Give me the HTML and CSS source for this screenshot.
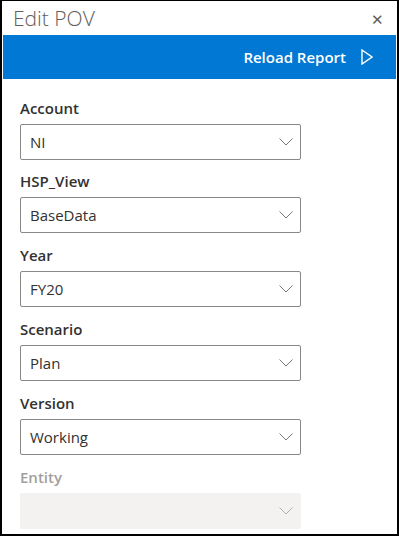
FILE: index.html
```html
<!DOCTYPE html>
<html lang="en">
  <head>
    <meta charset="UTF-8" />
    <title>Edit POV</title>
    <link rel="stylesheet" href="styles.css">
  </head>
  <body>
    <div class="panel">
      <div class="panel-header">
        <div class="panel-title">Edit POV</div>
        <div class="panel-close">&#x2715;</div>
      </div>

      <div class="command-bar">
        <span class="reload">Reload Report</span>
        <svg class="play" width="12" height="16" viewBox="0 0 12 16">
          <path d="M1 1 L11 8 L1 15 Z" fill="none" stroke="#fff" stroke-width="1.4" stroke-linejoin="miter" />
        </svg>
      </div>

      <div class="fields">
        <div class="field">
          <div class="field-label">Account</div>
          <div class="dropdown">
            <span class="dropdown-text">NI</span>
            <svg class="chevron" width="14" height="8" viewBox="0 0 14 8"><path d="M0.5 0.5 L7 7 L13.5 0.5" fill="none" stroke="#7a7876" stroke-width="1" /></svg>
          </div>
        </div>

        <div class="field">
          <div class="field-label">HSP_View</div>
          <div class="dropdown">
            <span class="dropdown-text">BaseData</span>
            <svg class="chevron" width="14" height="8" viewBox="0 0 14 8"><path d="M0.5 0.5 L7 7 L13.5 0.5" fill="none" stroke="#7a7876" stroke-width="1" /></svg>
          </div>
        </div>

        <div class="field">
          <div class="field-label">Year</div>
          <div class="dropdown">
            <span class="dropdown-text">FY20</span>
            <svg class="chevron" width="14" height="8" viewBox="0 0 14 8"><path d="M0.5 0.5 L7 7 L13.5 0.5" fill="none" stroke="#7a7876" stroke-width="1" /></svg>
          </div>
        </div>

        <div class="field">
          <div class="field-label">Scenario</div>
          <div class="dropdown">
            <span class="dropdown-text">Plan</span>
            <svg class="chevron" width="14" height="8" viewBox="0 0 14 8"><path d="M0.5 0.5 L7 7 L13.5 0.5" fill="none" stroke="#7a7876" stroke-width="1" /></svg>
          </div>
        </div>

        <div class="field">
          <div class="field-label">Version</div>
          <div class="dropdown">
            <span class="dropdown-text">Working</span>
            <svg class="chevron" width="14" height="8" viewBox="0 0 14 8"><path d="M0.5 0.5 L7 7 L13.5 0.5" fill="none" stroke="#7a7876" stroke-width="1" /></svg>
          </div>
        </div>

        <div class="field disabled">
          <div class="field-label">Entity</div>
          <div class="dropdown">
            <span class="dropdown-text"></span>
            <svg class="chevron" width="14" height="8" viewBox="0 0 14 8"><path d="M0.5 0.5 L7 7 L13.5 0.5" fill="none" stroke="#b3b0ad" stroke-width="1" /></svg>
          </div>
        </div>
      </div>
    </div>
  </body>
</html>
```

FILE: styles.css
```css
body {
  margin: 0;
  padding: 0;
  background-color: #fff;
  font-family: "Open Sans", "Noto Sans", sans-serif;
  color: #323130;
}

.panel {
  width: 395px;
  height: 533px;
  border: 2px solid #000;
  border-top-width: 1px;
  background-color: #fff;
  overflow: hidden;
}

.panel-header {
  display: flex;
  align-items: center;
  justify-content: space-between;
  height: 34px;
  padding: 0 13px 0 11px;
}

.panel-title {
  font-size: 21px;
  font-weight: 300;
  color: #605e5c;
  letter-spacing: 0;
}

.panel-close {
  font-size: 15px;
  color: #605e5c;
  margin-top: 2px;
}

.command-bar {
  display: flex;
  align-items: center;
  justify-content: flex-end;
  height: 44px;
  margin: 0 1px;
  padding-right: 23px;
  background-color: #0078d4;
}

.reload {
  color: #fff;
  font-size: 15px;
  font-weight: 600;
  margin-right: 15px;
}

.play {
  display: block;
}

.fields {
  padding: 18px 18px 0 18px;
}

.field {
  margin-bottom: 11px;
}

.field:first-child {
  margin-bottom: 10px;
}

.field-label {
  font-size: 15px;
  font-weight: 600;
  line-height: 22px;
  padding-bottom: 5px;
  color: #323130;
}

.dropdown {
  display: flex;
  align-items: center;
  justify-content: space-between;
  width: 281px;
  height: 36px;
  box-sizing: border-box;
  border: 1px solid #8a8886;
  border-radius: 2px;
  padding: 0 7px 0 9px;
  font-size: 15px;
  color: #323130;
}

.disabled .field-label {
  color: #a19f9d;
}

.disabled .dropdown {
  border-color: #f3f2f1;
  background-color: #f3f2f1;
}
```
